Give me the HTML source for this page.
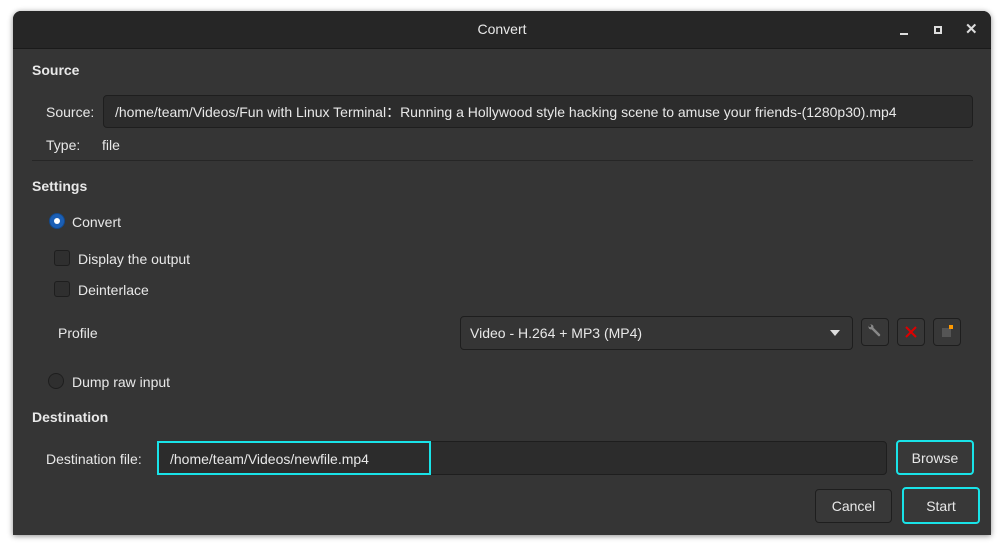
<!DOCTYPE html><html><head><style>
body{margin:0;width:1004px;height:551px;background:#fff;position:relative;overflow:hidden;font-family:"Liberation Sans","Noto Sans CJK SC",sans-serif;font-size:14px;color:#e8e8e8}
.a{position:absolute;white-space:nowrap}
#win{position:absolute;left:13px;top:11px;width:978px;height:524px;background:#353535;border-radius:8px 8px 0 0;box-shadow:0 1px 6px rgba(0,0,0,.45);overflow:hidden}
#tb{position:absolute;left:0;top:0;width:978px;height:37px;background:#262626;border-bottom:1px solid #1a1a1a}
.b{font-weight:bold}
.box{position:absolute;border:1px solid #1e1e1e;border-radius:4px;background:#2c2c2c;box-sizing:border-box}
.btn{position:absolute;border:1px solid #1e1e1e;border-radius:4px;background:#383838;box-sizing:border-box;text-align:center}
.cb{position:absolute;width:16px;height:16px;border:1px solid #1e1e1e;border-radius:3px;background:#2f2f2f;box-sizing:border-box}
</style></head><body>
<div id="win">
<div id="tb"><div class="a" style="left:0;width:978px;text-align:center;top:10px;font-size:14px">Convert</div>
<div class="a" style="left:887px;top:22px;width:8px;height:2px;background:#ddd"></div>
<div class="a" style="left:921px;top:15px;width:8px;height:8px;border:2px solid #ddd;box-sizing:border-box"></div>
<div class="a" style="left:952px;top:9px;font-size:15px;font-weight:bold;color:#ddd">✕</div>
</div>
<div class="a b" style="left:19px;top:51px">Source</div>
<div class="a" style="left:33px;top:93px">Source:</div>
<div class="box" style="left:90px;top:84px;width:870px;height:33px"></div>
<div class="a" style="left:102px;top:91px;font-size:14px">/home/team/Videos/Fun with Linux Terminal：Running a Hollywood style hacking scene to amuse your friends-(1280p30).mp4</div>
<div class="a" style="left:33px;top:126px">Type:</div>
<div class="a" style="left:89px;top:126px">file</div>
<div class="a" style="left:19px;top:149px;width:941px;height:1px;background:#262626"></div>
<div class="a b" style="left:19px;top:167px">Settings</div>
<div class="a" style="left:36px;top:202px;width:16px;height:16px;border-radius:50%;background:#1b5fb5;box-sizing:border-box;border:1px solid #134a8e"><div style="position:absolute;left:4px;top:4px;width:6px;height:6px;border-radius:50%;background:#fff"></div></div>
<div class="a" style="left:59px;top:203px">Convert</div>
<div class="cb" style="left:41px;top:239px"></div><div class="a" style="left:65px;top:240px">Display the output</div>
<div class="cb" style="left:41px;top:270px"></div><div class="a" style="left:65px;top:271px">Deinterlace</div>
<div class="a" style="left:45px;top:314px">Profile</div>
<div class="btn" style="left:447px;top:305px;width:393px;height:34px;background:#353535"></div>
<div class="a" style="left:457px;top:314px">Video - H.264 + MP3 (MP4)</div>
<div class="a" style="left:817px;top:319px;width:0;height:0;border-left:5px solid transparent;border-right:5px solid transparent;border-top:6px solid #ddd"></div>
<div class="btn" style="left:848px;top:307px;width:28px;height:28px"><svg width="26" height="26" style="position:absolute;left:0;top:0"><path d="M9 8 L11 10 M10 9 L17 16" stroke="#888" stroke-width="2.5" stroke-linecap="round"/><circle cx="9" cy="8" r="2.5" fill="#888"/><circle cx="8" cy="7" r="1.2" fill="#383838"/></svg></div>
<div class="btn" style="left:884px;top:307px;width:28px;height:28px"><svg width="26" height="26" style="position:absolute;left:0;top:0"><path d="M8 8 L18 18 M18 8 L8 18" stroke="#d00" stroke-width="2"/></svg></div>
<div class="btn" style="left:920px;top:307px;width:28px;height:28px"><div style="position:absolute;left:8px;top:9px;width:9px;height:9px;background:#555"></div><div style="position:absolute;left:15px;top:6px;width:4px;height:4px;background:#f90"></div></div>
<div class="a" style="left:35px;top:362px;width:16px;height:16px;border-radius:50%;background:#2f2f2f;border:1px solid #1e1e1e;box-sizing:border-box"></div>
<div class="a" style="left:59px;top:363px">Dump raw input</div>
<div class="a b" style="left:19px;top:398px">Destination</div>
<div class="a" style="left:33px;top:440px">Destination file:</div>
<div class="box" style="left:144px;top:430px;width:730px;height:34px"></div>
<div class="a" style="left:144px;top:430px;width:274px;height:34px;border:2px solid #19e3e8;box-sizing:border-box"></div>
<div class="a" style="left:157px;top:440px">/home/team/Videos/newfile.mp4</div>
<div class="btn" style="left:883px;top:429px;width:78px;height:35px;border:2px solid #19e3e8;line-height:33px">Browse</div>
<div class="btn" style="left:802px;top:478px;width:77px;height:34px;line-height:32px">Cancel</div>
<div class="btn" style="left:889px;top:476px;width:78px;height:37px;border:2px solid #19e3e8;line-height:35px">Start</div>
</div>
</body></html>
